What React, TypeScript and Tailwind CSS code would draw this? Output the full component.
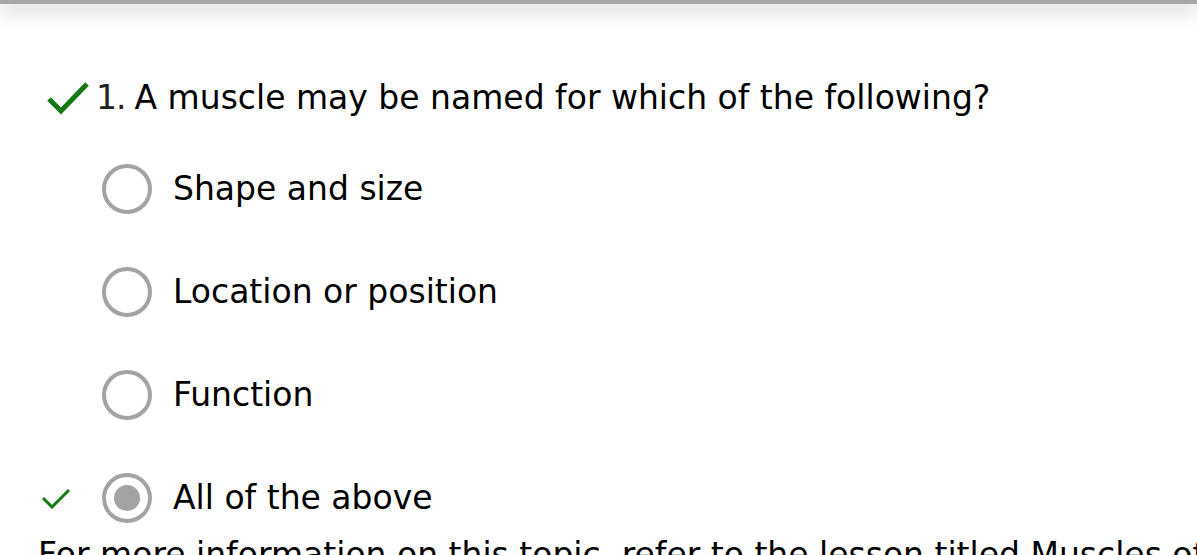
import React from 'react';

const options = [
  { label: 'Shape and size', selected: false, correct: false },
  { label: 'Location or position', selected: false, correct: false },
  { label: 'Function', selected: false, correct: false },
  { label: 'All of the above', selected: true, correct: true },
];

const BigCheck = () => (
  <svg width="44" height="34" viewBox="0 0 44 34" className="shrink-0">
    <path d="M3 18 L15 30 L41 3" fill="none" stroke="#137a13" strokeWidth="5" />
  </svg>
);

const SmallCheck = () => (
  <svg width="30" height="22" viewBox="0 0 30 22">
    <path d="M2 11 L11 20 L28 3" fill="none" stroke="#137a13" strokeWidth="3" />
  </svg>
);

export default function App() {
  return (
    <div
      className="w-[1197px] h-[555px] overflow-hidden bg-white text-black"
      style={{ fontFamily: '"DejaVu Sans", Verdana, sans-serif' }}
    >
      <div className="h-[4px] bg-[#a6a6a6] shadow-[0_5px_18px_rgba(0,0,0,0.45)]" />

      <div className="pt-[74px]">
        <div className="flex items-center pl-[46px]">
          <BigCheck />
          <h1 className="ml-[6px] flex text-[33px] leading-[40px]">
            <span className="text-[#222] tracking-[-1px]">1.</span>
            <span className="ml-[9px]">A muscle may be named for which of the following?</span>
          </h1>
        </div>

        <div className="mt-[46px] flex flex-col gap-[53px]">
          {options.map((o) => (
            <div key={o.label} className="flex items-center h-[50px]">
              <div className="w-[102px] flex justify-start pl-[41px]">
                {o.correct && <SmallCheck />}
              </div>
              <div className="w-[50px] h-[50px] rounded-full border-4 border-[#a3a3a3] flex items-center justify-center">
                {o.selected && <div className="w-[26px] h-[26px] rounded-full bg-[#a3a3a3]" />}
              </div>
              <span className="ml-[21px] text-[33px] leading-[40px]">{o.label}</span>
            </div>
          ))}
        </div>

        <p className="mt-[12px] pl-[38px] text-[33px] leading-[40px] whitespace-nowrap">
          For more information on this topic, refer to the lesson titled Muscles of the Human Body.
        </p>
      </div>
    </div>
  );
}
